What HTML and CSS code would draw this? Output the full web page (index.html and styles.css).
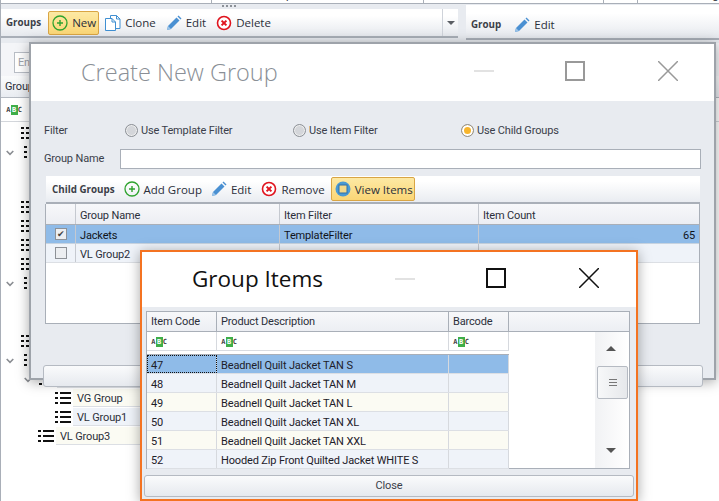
FILE: index.html
```html
<!DOCTYPE html>
<html lang="en">
<head>
<meta charset="utf-8">
<title>Group Items</title>
<link rel="stylesheet" href="styles.css">
</head>
<body>
<svg class="defs" width="0" height="0">
  <symbol id="i-add" viewBox="0 0 16 16"><circle cx="8" cy="8" r="7" fill="none" stroke="#2fa32f" stroke-width="1.3"/><path d="M8 5v6M5 8h6" stroke="#2fa32f" stroke-width="1.4"/></symbol>
  <symbol id="i-del" viewBox="0 0 16 16"><circle cx="8" cy="8" r="6.5" fill="#fff" stroke="#e0141e" stroke-width="1.6"/><path d="M5.6 5.6l4.8 4.8M10.4 5.6l-4.8 4.8" stroke="#e0141e" stroke-width="2"/></symbol>
  <symbol id="i-edit" viewBox="0 0 16 16"><path d="M1 15l1-4 8.5-8.5 3 3L5 14z" fill="#4a90d2"/><path d="M11.500 1.500l1-1 3 3-1 1z" fill="#4a90d2"/><path d="M1 15l1-4 3 3z" fill="#9cc4e8"/></symbol>
  <symbol id="i-clone" viewBox="0 0 16 16"><path d="M5.500 3.500V.5h6l3.500 3.500v9.500H11" fill="#fff" stroke="#3f8fd2"/><path d="M.5 3.500h6.500l3.500 3.500v8.500H.5z" fill="#fff" stroke="#3f8fd2"/><path d="M7 3.500V7h3.500M11.500.5V4H15" fill="none" stroke="#3f8fd2"/></symbol>
  <symbol id="i-view" viewBox="0 0 16 16"><circle cx="8" cy="8" r="7.500" fill="#4a9ad4"/><rect x="4" y="4" width="8" height="8" fill="#f3d98a" stroke="#2f6fa8"/></symbol>
  <symbol id="i-list" viewBox="0 0 16 12"><path d="M0 0h3v2H0zM5 0h11v2H5zM0 5h3v2H0zM5 5h11v2H5zM0 10h3v2H0zM5 10h11v2H5z" fill="#111"/></symbol>
  <symbol id="i-chev" viewBox="0 0 8 6"><path d="M.7 1l3.300 3.300L7.300 1" fill="none" stroke="#8a8d92" stroke-width="1.600"/></symbol>
</svg>

<div class="app">
  <div class="top-strip">
    <span class="ts-a">Item Code</span><span class="ts-b">Product Description</span>
    <i class="ts-sep s1"></i><i class="ts-sep s2"></i><i class="ts-sep s3"></i><i class="ts-sep s4"></i>
    <span class="ts-tab">Font</span><span class="ts-tab2">Image</span>
  </div>
  <div class="splitter-dots"></div>
  <div class="bars">
    <div class="bar bar-left">
      <b class="bar-title">Groups</b>
      <span class="tb tb-hot"><svg class="ic"><use href="#i-add"/></svg>New</span>
      <span class="tb"><svg class="ic"><use href="#i-clone"/></svg>Clone</span>
      <span class="tb"><svg class="ic"><use href="#i-edit"/></svg>Edit</span>
      <span class="tb"><svg class="ic"><use href="#i-del"/></svg>Delete</span>
      <span class="bar-drop"><i class="arrow-down"></i></span>
    </div>
    <div class="bar bar-right">
      <b class="bar-title">Group</b>
      <span class="tb"><svg class="ic"><use href="#i-edit"/></svg>Edit</span>
    </div>
  </div>
  <div class="pane">
    <div class="search"><span class="search-box">Enter text</span></div>
    <div class="pane-head">Group Name</div>
    <div class="pane-filter"><span class="abc"><i>A</i><i class="abc-b">B</i><i>C</i></span></div>
    <div class="tree">
      <div class="node n0"><span class="chev"></span><svg class="li"><use href="#i-list"/></svg></div>
      <div class="node n0"><svg class="chev-i"><use href="#i-chev"/></svg><svg class="li"><use href="#i-list"/></svg></div>
      <div class="tree-gap"></div>
      <div class="node n0"><span class="chev"></span><svg class="li"><use href="#i-list"/></svg></div>
      <div class="node n0"><span class="chev"></span><svg class="li"><use href="#i-list"/></svg></div>
      <div class="node n0"><span class="chev"></span><svg class="li"><use href="#i-list"/></svg></div>
      <div class="node n0"><span class="chev"></span><svg class="li"><use href="#i-list"/></svg></div>
      <div class="node n0"><svg class="chev-i"><use href="#i-chev"/></svg><svg class="li"><use href="#i-list"/></svg></div>
      <div class="tree-gap2"></div>
      <div class="node n0"><span class="chev"></span><svg class="li"><use href="#i-list"/></svg></div>
      <div class="node n0"><svg class="chev-i"><use href="#i-chev"/></svg><svg class="li"><use href="#i-list"/></svg></div>
      <div class="node n1"><svg class="chev-i"><use href="#i-chev"/></svg><svg class="li"><use href="#i-list"/></svg><span class="cell cream">VL Group2</span></div>
      <div class="node n2"><svg class="li"><use href="#i-list"/></svg><span class="cell cream">VG Group</span></div>
      <div class="node n2"><svg class="li"><use href="#i-list"/></svg><span class="cell blue">VL Group1</span></div>
      <div class="node n3"><svg class="li"><use href="#i-list"/></svg><span class="cell cream">VL Group3</span></div>
    </div>
  </div>

  <section class="win win-create">
    <header class="win-title">
      <h1 class="title-create">Create New Group</h1>
      <span class="w-min"></span><span class="w-max"></span>
      <svg class="w-x" viewBox="0 0 20 20"><path d="M0 0l20 20M20 0L0 20" stroke="#999" stroke-width="1.500" fill="none"/></svg>
    </header>
    <div class="form">
      <div class="form-row">
        <span class="lbl">Filter</span>
        <label class="radio r1"><i class="dot"></i>Use Template Filter</label>
        <label class="radio r2"><i class="dot"></i>Use Item Filter</label>
        <label class="radio r3"><i class="dot on"></i>Use Child Groups</label>
      </div>
      <div class="form-row row-name">
        <span class="lbl lbl-name">Group Name</span>
        <span class="name-input"></span>
      </div>
      <div class="child">
        <div class="child-bar">
          <b class="bar-title">Child Groups</b>
          <span class="tb tb-add"><svg class="ic"><use href="#i-add"/></svg>Add Group</span>
          <span class="tb"><svg class="ic"><use href="#i-edit"/></svg>Edit</span>
          <span class="tb"><svg class="ic"><use href="#i-del"/></svg>Remove</span>
          <span class="tb tb-hot"><svg class="ic"><use href="#i-view"/></svg>View Items</span>
        </div>
        <div class="cgrid">
          <div class="c-row c-head"><span class="c0"></span><span class="c1">Group Name</span><span class="c2">Item Filter</span><span class="c3">Item Count</span></div>
          <div class="c-row c-sel"><span class="c0"><i class="chk">✔</i></span><span class="c1">Jackets</span><span class="c2">TemplateFilter</span><span class="c3 num">65</span></div>
          <div class="c-row c-alt"><span class="c0"><i class="chk"></i></span><span class="c1">VL Group2</span><span class="c2"></span><span class="c3"></span></div>
        </div>
      </div>
      <div class="btn btn-create">Close</div>
    </div>
  </section>

  <section class="win win-items">
    <header class="win-title items-title">
      <h1 class="title-items">Group Items</h1>
      <span class="w-min"></span><span class="w-max"></span>
      <svg class="w-x" viewBox="0 0 20 20"><path d="M0 0l20 20M20 0L0 20" stroke="#111" stroke-width="1.500" fill="none"/></svg>
    </header>
    <div class="items-body">
      <div class="igrid">
        <div class="i-row i-head"><span class="k0">Item Code</span><span class="k1">Product Description</span><span class="k2">Barcode</span><span class="k3"></span></div>
        <div class="i-main">
          <div class="i-cols">
            <div class="i-row i-filter"><span class="k0"><span class="abc"><i>A</i><i class="abc-b">B</i><i>C</i></span></span><span class="k1"><span class="abc"><i>A</i><i class="abc-b">B</i><i>C</i></span></span><span class="k2"><span class="abc"><i>A</i><i class="abc-b">B</i><i>C</i></span></span></div>
            <div class="i-row d sel"><span class="k0 focus">47</span><span class="k1">Beadnell Quilt Jacket TAN S</span><span class="k2"></span></div>
            <div class="i-row d blue"><span class="k0">48</span><span class="k1">Beadnell Quilt Jacket TAN M</span><span class="k2"></span></div>
            <div class="i-row d cream"><span class="k0">49</span><span class="k1">Beadnell Quilt Jacket TAN L</span><span class="k2"></span></div>
            <div class="i-row d blue"><span class="k0">50</span><span class="k1">Beadnell Quilt Jacket TAN XL</span><span class="k2"></span></div>
            <div class="i-row d cream"><span class="k0">51</span><span class="k1">Beadnell Quilt Jacket TAN XXL</span><span class="k2"></span></div>
            <div class="i-row d blue"><span class="k0">52</span><span class="k1">Hooded Zip Front Quilted Jacket WHITE S</span><span class="k2"></span></div>
          </div>
          <div class="sbar">
            <i class="sb-up"></i>
            <span class="sb-thumb"><i></i></span>
            <i class="sb-down"></i>
          </div>
        </div>
      </div>
      <div class="btn btn-items">Close</div>
    </div>
  </section>
</div>
</body>
</html>
```

FILE: styles.css
```css
* { box-sizing: border-box; }
html, body { margin: 0; padding: 0; background: #fff; }
body { font-family: Roboto, "Open Sans", sans-serif; font-size: 11px; letter-spacing: -0.15px; color: #2b2f3a; }
.defs { position: absolute; }
i { font-style: normal; }

.app { position: relative; width: 719px; height: 501px; overflow: hidden; border-left: 1px solid #a9afb8; }

.top-strip { position: relative; height: 4px; background: #fff; border-bottom: 1px solid #a9afb8; overflow: hidden; }
.ts-a, .ts-b, .ts-tab, .ts-tab2 { position: absolute; top: -11px; line-height: 14px; }
.ts-a { left: 5px; } .ts-b { left: 215px; }
.ts-tab { left: 655px; } .ts-tab2 { left: 693px; }
.ts-sep { position: absolute; top: 0; width: 1px; height: 4px; background: #a9afb8; }
.s1 { left: 210px; } .s2 { left: 422px; } .s3 { left: 602px; } .s4 { left: 636px; }
.splitter-dots { position: absolute; left: 221px; top: 5px; width: 14px; height: 2px; background: repeating-linear-gradient(90deg, #8b9097 0 2px, transparent 2px 4px); }

.bars { display: flex; height: 35px; background: #e8ebf0; }
.bar { display: flex; align-items: center; background: linear-gradient(#fff 25%, #e6e9ee); border-bottom: 2px solid #a9afb8; }
.bar-left { width: 457px; margin-top: 5px; height: 29px; padding: 0 0 0 5px; gap: 2px; }
.bar-right { flex: 1; margin: 1px 0 0 8px; height: 35px; padding: 6px 0 0 5px; gap: 7px; }
.bar-title { font-family: "Open Sans", sans-serif; font-size: 9.800px; font-weight: 700; letter-spacing: 0; color: #3c3f48; margin-right: 5px; }
.bar-right .bar-title { margin-right: 2px; }
.tb { display: flex; align-items: center; gap: 4px; height: 24px; padding: 0 4px; font-family: "Open Sans", sans-serif; font-size: 11.500px; letter-spacing: 0; white-space: nowrap; }
.tb-hot { background: linear-gradient(#fde9a4, #fbd676); border: 1px solid #d9a544; border-radius: 2px; padding: 0 2px 0 3px; }
.ic { width: 16px; height: 16px; flex: none; }
.bar-drop { margin-left: auto; width: 16px; height: 27px; border-left: 1px solid #cfd3da; display: flex; align-items: center; justify-content: center; }
.arrow-down { width: 0; height: 0; border: 4px solid transparent; border-top: 4px solid #5b5e64; border-bottom: 0; }

.pane { background: #f3f4f7; }
.search { height: 37px; padding: 13px 0 0 13px; background: linear-gradient(#e8ebf0 0 4px, #f4f5f8 4px); }
.search-box { display: block; width: 100px; height: 21px; background: #fff; border: 1px solid #b9bec6; padding-left: 3px; line-height: 19px; color: #9ea3aa; }
.pane-head { height: 22px; line-height: 21px; padding-left: 4px; background: linear-gradient(#fafbfc, #e9ecf1); border-bottom: 1px solid #b5bac2; }
.pane-filter { height: 24px; padding: 4px 0 0 5px; background: #fff; border-bottom: 1px solid #d3d6db; }
.tree { background: #fff; padding-top: 1px; height: 400px; }
.node { display: flex; align-items: center; height: 19px; }
.n0 { padding-left: 4px; }
.chev { width: 16px; flex: none; }
.chev-i { width: 8px; height: 6px; flex: none; margin-top: 3px !important; }
.n0 .chev-i { margin: 0 10px 0 1px; }
.li { width: 16px; height: 12px; flex: none; }
.n1 { padding-left: 22px; }
.n1 .chev-i { margin: 0 7px 0 1px; }
.n2 { padding-left: 54px; }
.n3 { padding-left: 37px; }
.cell { margin-left: 2px; display: block; width: 300px; height: 18px; line-height: 19px; padding-left: 4px; border-bottom: 1px solid #dcdfe4; }
.cream { background: #fbfbf3; }
.blue { background: #eff3f9; }
.tree-gap { height: 36px; }
.tree-gap2 { height: 39px; }

.abc { display: inline-flex; align-items: center; font-family: "DejaVu Sans Mono", monospace; font-size: 7px; font-weight: 700; letter-spacing: 0; height: 10px; color: #444; line-height: 10px; }
.abc i { width: 4.500px; text-align: center; }
.abc-b { background: #3fae49; color: #fff; width: 7px !important; }

.win { position: absolute; background: #e8ebf0; }
.win-create { left: 28px; top: 42px; width: 687px; height: 338px; border: 2px solid #9ea3aa; box-shadow: 0 2px 12px rgba(0,0,0,.35); }
.win-title { position: relative; height: 57px; background: #fff; margin: 0; }
h1 { margin: 0; font-weight: 400; letter-spacing: 0; }
.title-create { position: absolute; left: 50px; top: 12px; font-family: "Open Sans", sans-serif; font-weight: 300; font-size: 23.500px; line-height: 33px; color: #8a8f96; }
.w-min { position: absolute; left: 443px; top: 26px; width: 20px; height: 2px; background: #e2e2e2; }
.w-max { position: absolute; left: 534px; top: 17px; width: 20px; height: 20px; border: 2px solid #999; }
.w-x { position: absolute; left: 627px; top: 17px; width: 20px; height: 20px; }

.form { position: relative; height: 277px; padding: 0 14px; }
.form-row { position: relative; height: 18px; display: flex; align-items: center; }
.form-row:first-child { margin-top: 20px; }
.lbl { color: #3a3e4a; margin-left: -1px; }
.lbl-name { margin-bottom: 2px; }
.radio { position: absolute; top: 0; display: flex; align-items: center; gap: 3px; height: 18px; white-space: nowrap; color: #3a3e4a; }
.r1 { left: 80px; } .r2 { left: 248px; } .r3 { left: 416px; }
.dot { width: 13px; height: 13px; border-radius: 50%; background: #d4d6da; border: 1px solid #8c9096; box-shadow: inset 0 0 0 1px #eee; }
.dot.on { background: #f7b52c; border-color: #8c9096; box-shadow: inset 0 0 0 2px #fff; }
.row-name { margin-top: 10px; height: 20px; }
.name-input { position: absolute; left: 75px; top: 0; width: 581px; height: 20px; background: #fff; border: 1px solid #a9afb8; }
.child { margin-top: 7px; width: 655px; }
.child-bar { display: flex; align-items: center; margin-left: 1px; height: 28px; padding-left: 6px; background: linear-gradient(#fff 20%, #e9ecf1); border-bottom: 2px solid #a9afb8; gap: 2px; }
.child-bar .bar-title { margin-right: 3px; }
.tb-add { margin-right: -1px; }
.child-bar .tb-hot { margin-left: 0; padding-right: 1px; }
.cgrid { height: 120px; background: #fff; border: 1px solid #a9afb8; border-top: 0; }
.c-row { display: flex; height: 19px; }
.c-row span { display: block; line-height: 14px; padding: 4px 0 0 4px; border-right: 1px solid #c5c9d0; white-space: nowrap; overflow: hidden; }
.c0 { width: 30px; display: flex !important; align-items: center; justify-content: center; padding: 0 !important; }
.c1 { width: 204px; } .c2 { width: 199px; } .c3 { flex: 1; border-right: 0 !important; }
.c-head { height: 21px; background: linear-gradient(#f7f8fa, #eceef3); border-bottom: 1px solid #a9afb8; }
.c-row.c-head span { padding-top: 5px; }
.c-sel { background: #8fbbe8; color: #10131a; border-bottom: 1px solid #c7d3e0; }
.c-alt { background: #eff3f9; border-bottom: 1px solid #dcdfe4; }
.c-row .num { text-align: right; padding-right: 4px; }
.chk { width: 12px; height: 12px; border: 1px solid #8d9197; background: #eceef1; font-size: 9px; line-height: 10px; text-align: center; color: #444; display: block; }
.btn { background: linear-gradient(#fafbfc, #e6e9ee); border: 1px solid #b5bac2; border-radius: 3px; text-align: center; color: #3a3e4a; }
.btn-create { position: absolute; left: 12px; top: 244px; width: 660px; height: 22px; line-height: 20px; }

.win-items { left: 139px; top: 250px; width: 498px; height: 251px; border: 2px solid #f47321; box-shadow: 0 2px 12px rgba(0,0,0,.35); }
.items-title { height: 55px; }
.title-items { position: absolute; left: 50px; top: 12px; font-family: "Open Sans", sans-serif; font-size: 22.500px; line-height: 30px; color: #111; }
.items-title .w-min { left: 253px; top: 26px; }
.items-title .w-max { left: 344px; top: 16px; border-color: #111; }
.items-title .w-x { left: 437px; top: 16px; }
.items-body { position: relative; height: 192px; padding: 4px 0 0 4px; }
.igrid { width: 484px; height: 158px; background: #fff; border: 1px solid #a9afb8; }
.i-row { display: flex; }
.i-row > span { display: block; padding-left: 4px; border-right: 1px solid #d6d9de; white-space: nowrap; overflow: hidden; line-height: 18px; }
.k0 { width: 70px; } .k1 { width: 232px; } .k2 { width: 60px; } .k3 { flex: 1; border-right: 0 !important; }
.i-head { height: 20px; background: linear-gradient(#f7f8fa, #eceef3); border-bottom: 1px solid #a9afb8; }
.i-head > span { border-right-color: #a9afb8; padding-top: 1px; }
.i-main { display: flex; height: 136px; }
.i-cols { width: 448px; }
.i-filter { height: 23px; background: linear-gradient(#fff 18px, #d9dce1 18px, #d9dce1 19px, #fff 19px, #fff 22px, #a9afb8 22px); width: 362px; }
.i-filter > span { height: 18px; }
.d { width: 362px; height: 19px; border-bottom: 1px solid #dcdfe4; color: #1d2029; }
.i-row.d > span { padding-top: 4px; line-height: 14px; }
.d.sel { background: #8fbbe8; }
.focus { outline: 1px dotted #111; outline-offset: -1px; }
.sbar { position: relative; width: 34px; height: 136px; background: linear-gradient(90deg, #f1f2f4, #fff); }
.sb-up, .sb-down { position: absolute; left: 11px; width: 0; height: 0; border: 5px solid transparent; }
.sb-up { top: 14px; border-bottom: 5px solid #555; border-top: 0; }
.sb-down { top: 116px; border-top: 5px solid #555; border-bottom: 0; }
.sb-thumb { position: absolute; left: 2px; top: 34px; width: 31px; height: 33px; background: linear-gradient(90deg, #f7f8f9, #e6e8eb); border: 1px solid #b5bac2; border-radius: 2px; display: flex; align-items: center; justify-content: center; }
.sb-thumb i { width: 8px; height: 7px; border-top: 1px solid #777; border-bottom: 1px solid #777; background: linear-gradient(#777,#777) center/100% 1px no-repeat; }
.btn-items { position: absolute; left: 2px; top: 168px; width: 490px; height: 22px; line-height: 20px; }
```
